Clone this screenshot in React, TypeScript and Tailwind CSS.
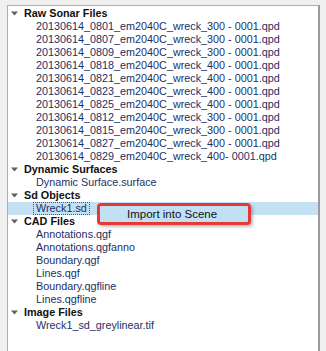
const groups: { title: string; items: string[] }[] = [
  {
    title: "Raw Sonar Files",
    items: [
      "20130614_0801_em2040C_wreck_300 - 0001.qpd",
      "20130614_0807_em2040C_wreck_300 - 0001.qpd",
      "20130614_0809_em2040C_wreck_300 - 0001.qpd",
      "20130614_0818_em2040C_wreck_400 - 0001.qpd",
      "20130614_0821_em2040C_wreck_400 - 0001.qpd",
      "20130614_0823_em2040C_wreck_400 - 0001.qpd",
      "20130614_0825_em2040C_wreck_400 - 0001.qpd",
      "20130614_0812_em2040C_wreck_300 - 0001.qpd",
      "20130614_0815_em2040C_wreck_300 - 0001.qpd",
      "20130614_0827_em2040C_wreck_400 - 0001.qpd",
      "20130614_0829_em2040C_wreck_400- 0001.qpd",
    ],
  },
  { title: "Dynamic Surfaces", items: ["Dynamic Surface.surface"] },
  { title: "Sd Objects", items: ["Wreck1.sd"] },
  {
    title: "CAD Files",
    items: [
      "Annotations.qgf",
      "Annotations.qgfanno",
      "Boundary.qgf",
      "Lines.qgf",
      "Boundary.qgfline",
      "Lines.qgfline",
    ],
  },
  { title: "Image Files", items: ["Wreck1_sd_greylinear.tif"] },
];

function Caret() {
  return (
    <svg width="7" height="5" viewBox="0 0 7 5" className="ml-[3px] mr-[6px] shrink-0">
      <path d="M0 0.5h7L3.5 4.5z" fill="#606060" />
    </svg>
  );
}

export default function App() {
  return (
    <div
      className="relative h-[351px] w-[326px] overflow-hidden bg-[#f0f0f0] pl-[7px] pt-[5px]"
      style={{ fontFamily: '"Liberation Sans", Arial, sans-serif' }}
    >
      <div className="h-[360px] w-[313px] border-l border-t border-[#adadad] border-r-2 border-r-[#9a9a9a] bg-white pt-px text-[10.8px] leading-[13px]">
        {groups.map((g) => (
          <div key={g.title}>
            <div className="flex h-[13px] items-center font-bold text-[#111]">
              <Caret />
              <span>{g.title}</span>
            </div>
            {g.items.map((it) =>
              it === "Wreck1.sd" ? (
                <div key={it} className="flex h-[13px] items-center bg-[#c4e0f3] pl-[25px]">
                  <span className="border border-dotted border-[#555] px-[2px] leading-[11px] text-[#1c2f66]">
                    {it}
                  </span>
                </div>
              ) : (
                <div key={it} className="flex h-[13px] items-center whitespace-nowrap pl-[28px] text-[#1c2f66]">
                  {it}
                </div>
              )
            )}
          </div>
        ))}
      </div>
      <div className="absolute left-[97px] top-[203px] flex h-[22px] w-[154px] items-center rounded-[4px] border-[3px] border-[#e53935] bg-[#c2dff4] pl-[27px] text-[11.5px] leading-[13px] text-[#111] shadow-[2px_2px_3px_rgba(0,0,0,0.25)]">
        Import into Scene
      </div>
    </div>
  );
}
